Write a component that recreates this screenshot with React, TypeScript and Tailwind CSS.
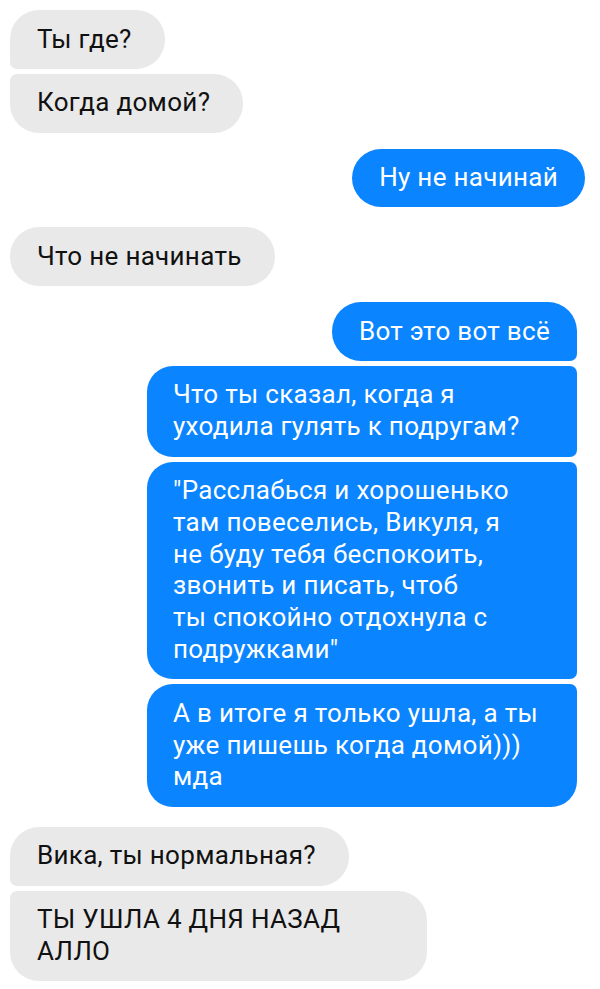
import React from "react";

type Side = "in" | "out";

interface BubbleProps {
  side: Side;
  lines: string[];
  className?: string;
}

function Bubble({ side, lines, className = "" }: BubbleProps) {
  const color =
    side === "in"
      ? "bg-[#e9e9e9] text-[#111111] pl-[27px] pr-[33px]"
      : "bg-[#0a84ff] text-white px-[27px]";
  return (
    <div className={`py-[13.5px] text-[26px] tracking-[0.3px] leading-[31.8px] ${color} ${className}`}>
      {lines.map((line, i) => (
        <div key={i} className="whitespace-nowrap">
          {line}
        </div>
      ))}
    </div>
  );
}

export default function App() {
  return (
    <div className="min-h-[989px] bg-white font-['Roboto','Liberation_Sans',sans-serif] pt-[10px] pl-[10px] pr-[23px] flex flex-col">
      {/* incoming group */}
      <div className="flex flex-col items-start gap-[5px]">
        <Bubble side="in" lines={["Ты где?"]} className="rounded-[29px] rounded-bl-[7px]" />
        <Bubble side="in" lines={["Когда домой?"]} className="rounded-[29px] rounded-tl-[7px]" />
      </div>

      <div className="flex flex-col items-end mt-[16px]">
        <Bubble side="out" lines={["Ну не начинай"]} className="rounded-[29px] mr-[-8px]" />
      </div>

      <div className="flex flex-col items-start mt-[20px]">
        <Bubble side="in" lines={["Что не начинать"]} className="rounded-[29px]" />
      </div>

      {/* outgoing group */}
      <div className="flex flex-col items-end gap-[5px] mt-[16px]">
        <Bubble side="out" lines={["Вот это вот всё"]} className="rounded-[29px] rounded-br-[7px]" />
        <Bubble
          side="out"
          lines={["Что ты сказал, когда я", "уходила гулять к подругам?"]}
          className="w-[430px] rounded-l-[26px] rounded-r-[7px] !pl-[26px]"
        />
        <Bubble
          side="out"
          lines={[
            "\"Расслабься и хорошенько",
            "там повеселись, Викуля, я",
            "не буду тебя беспокоить,",
            "звонить и писать, чтоб",
            "ты спокойно отдохнула с",
            "подружками\"",
          ]}
          className="w-[430px] rounded-l-[26px] rounded-r-[7px] !pl-[26px]"
        />
        <Bubble
          side="out"
          lines={["А в итоге я только ушла, а ты", "уже пишешь когда домой)))", "мда"]}
          className="w-[430px] rounded-l-[26px] rounded-tr-[7px] rounded-br-[26px] !pl-[26px]"
        />
      </div>

      <div className="flex flex-col items-start gap-[5px] mt-[20px]">
        <Bubble side="in" lines={["Вика, ты нормальная?"]} className="rounded-[29px] rounded-bl-[7px]" />
        <Bubble
          side="in"
          lines={["ТЫ УШЛА 4 ДНЯ НАЗАД", "АЛЛО"]}
          className="w-[417px] rounded-[29px] rounded-tl-[7px]"
        />
      </div>
    </div>
  );
}
